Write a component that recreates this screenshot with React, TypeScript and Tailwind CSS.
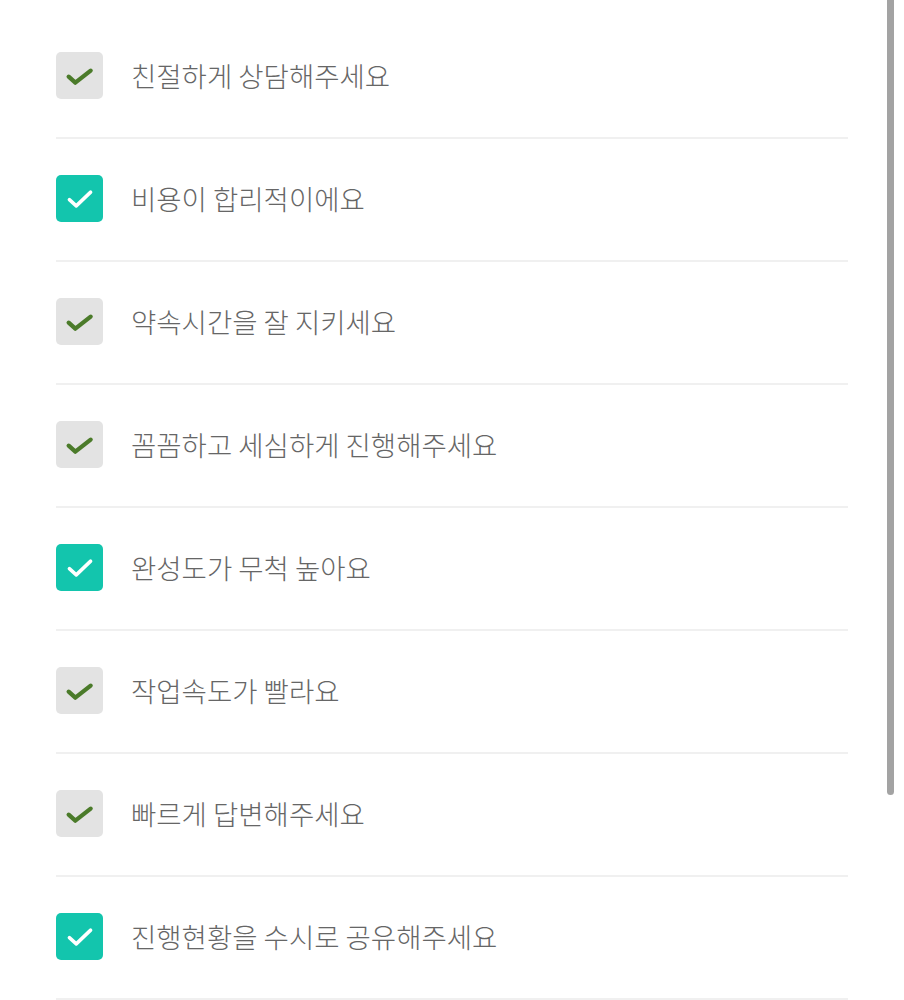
const items = [
  { label: '친절하게 상담해주세요', on: false },
  { label: '비용이 합리적이에요', on: true },
  { label: '약속시간을 잘 지키세요', on: false },
  { label: '꼼꼼하고 세심하게 진행해주세요', on: false },
  { label: '완성도가 무척 높아요', on: true },
  { label: '작업속도가 빨라요', on: false },
  { label: '빠르게 답변해주세요', on: false },
  { label: '진행현황을 수시로 공유해주세요', on: true },
];

function Check({ on }: { on: boolean }) {
  if (on) {
    return (
      <div className="flex h-[47px] w-[47px] shrink-0 items-center justify-center rounded-[5px] bg-[#13c5ad]">
        <svg width="30" height="30" viewBox="0 0 24 24" fill="none">
          <path d="M3.5 12.5l5.5 5L20.5 6.5" stroke="#ffffff" strokeWidth="2.8" strokeLinecap="round" strokeLinejoin="round" />
        </svg>
      </div>
    );
  }
  return (
    <div className="flex h-[47px] w-[47px] shrink-0 items-center justify-center rounded-[5px] bg-[#e3e3e3]">
      <svg width="32" height="32" viewBox="0 0 24 24" fill="none">
        <path d="M3.5 12.5l5 4.5L20 8" stroke="#4b7b2a" strokeWidth="3.2" strokeLinecap="round" strokeLinejoin="round" />
      </svg>
    </div>
  );
}

export default function App() {
  return (
    <div className="relative min-h-[1000px] w-[904px] overflow-hidden bg-white" style={{ fontFamily: '"Noto Sans CJK KR", "Noto Sans", sans-serif' }}>
      <div className="px-[56px] pr-[56px] pt-[16px]">
        <ul className="w-[792px]">
          {items.map((item) => (
            <li key={item.label} className="flex h-[123px] items-center gap-[28px] border-b-2 border-[#f0f0f0] pb-[2px]">
              <Check on={item.on} />
              <span className="text-[27.5px] font-light leading-none text-[#666666]">{item.label}</span>
            </li>
          ))}
        </ul>
      </div>
      <div className="absolute right-[10px] top-0 h-[795px] w-[7px] rounded-b-full bg-[#a3a3a3]" />
    </div>
  );
}
